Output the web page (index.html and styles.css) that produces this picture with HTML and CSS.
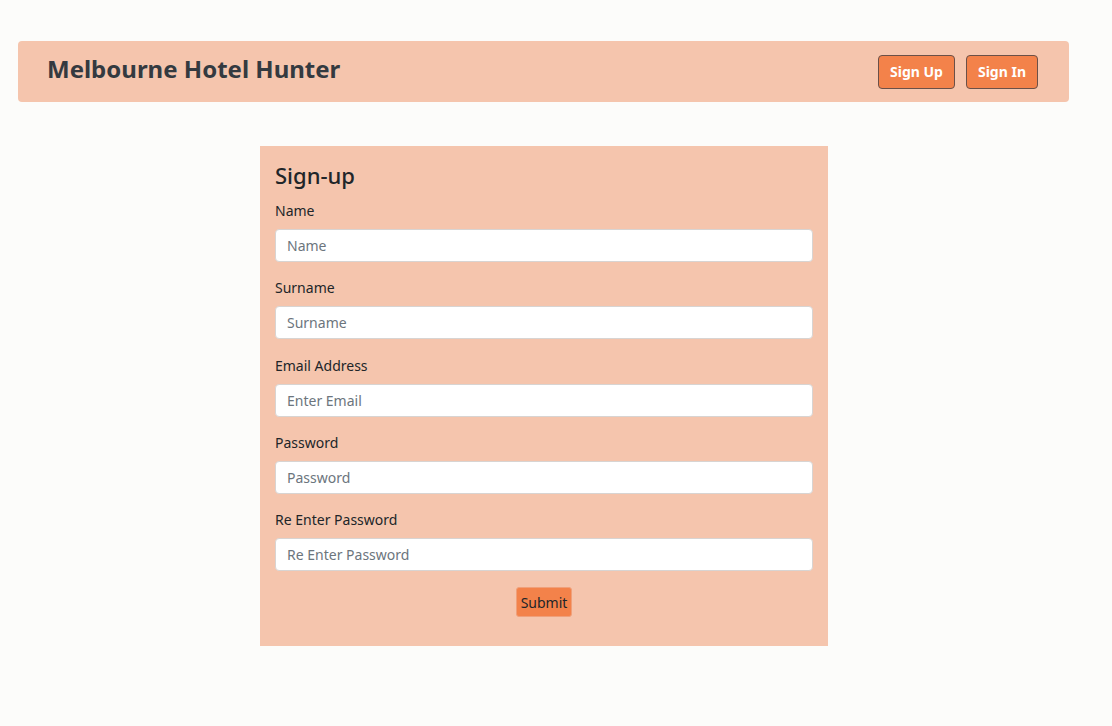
FILE: index.html
```html
<!DOCTYPE html>
<html lang="en">
<head>
<meta charset="utf-8">
<title>Melbourne Hotel Hunter</title>
<link rel="stylesheet" href="styles.css">
</head>
<body>
<nav class="navbar">
  <h1 class="brand">Melbourne Hotel Hunter</h1>
  <div class="nav-actions">
    <button class="nav-btn" type="button">Sign Up</button>
    <button class="nav-btn" type="button">Sign In</button>
  </div>
</nav>
<main class="page">
  <form class="card">
    <h2 class="card-title">Sign-up</h2>
    <div class="field">
      <label class="label" for="name">Name</label>
      <input class="input" id="name" type="text" placeholder="Name">
    </div>
    <div class="field">
      <label class="label" for="surname">Surname</label>
      <input class="input" id="surname" type="text" placeholder="Surname">
    </div>
    <div class="field">
      <label class="label" for="email">Email Address</label>
      <input class="input" id="email" type="email" placeholder="Enter Email">
    </div>
    <div class="field">
      <label class="label" for="pw">Password</label>
      <input class="input" id="pw" type="password" placeholder="Password">
    </div>
    <div class="field">
      <label class="label" for="pw2">Re Enter Password</label>
      <input class="input" id="pw2" type="password" placeholder="Re Enter Password">
    </div>
    <div class="actions">
      <button class="submit" type="button">Submit</button>
    </div>
  </form>
</main>
</body>
</html>
```
FILE: styles.css
```css
* { box-sizing: border-box; }
html, body { margin: 0; padding: 0; }
body {
  background: #fcfcfa;
  font-family: "Segoe UI", "Noto Sans", "Open Sans", sans-serif;
  color: #212529;
  font-size: 14px;
}
.navbar {
  margin: 41px 43px 0 18px;
  height: 61px;
  background: #f5c5ad;
  border-radius: 4px;
  display: flex;
  align-items: center;
  justify-content: space-between;
  padding: 0 31px 0 29px;
}
.brand {
  margin: -4px 0 0;
  font-size: 24px;
  font-weight: 700;
  color: #343a40;
  line-height: 1.2;
}
.nav-actions {
  display: flex;
  gap: 11px;
  padding-top: 1px;
}
.nav-btn {
  font-family: inherit;
  font-size: 14px;
  font-weight: 700;
  color: #fff;
  background: #f3824a;
  border: 1px solid #6b5048;
  border-radius: 4px;
  height: 34px;
  padding: 0 11px;
  margin-top: -1px;
  cursor: pointer;
}
.page {
  display: flex;
  justify-content: center;
  padding-top: 44px;
}
.card {
  width: 568px;
  margin-left: -24px;
  background: #f5c5ad;
  padding: 15px 15px 29px;
}
.card-title {
  margin: 0 0 12px;
  font-size: 22px;
  font-weight: 500;
  line-height: 28px;
  color: #212529;
}
.field { margin-bottom: 16.25px; }
.label {
  display: block;
  line-height: 20px;
  margin-bottom: 8px;
  font-size: 14px;
  color: #212529;
}
.input {
  display: block;
  width: 100%;
  height: 33px;
  border: 1px solid #d8d4d2;
  border-radius: 4px;
  background: #fff;
  padding: 0 11px;
  font-family: inherit;
  font-size: 14px;
  color: #495057;
}
.input::placeholder { color: #6c757d; }
.actions {
  display: flex;
  justify-content: center;
}
.submit {
  font-family: inherit;
  font-size: 14px;
  color: #212529;
  background: #f3824a;
  border: 1px solid #f0a07a;
  border-radius: 3px;
  height: 30px;
  padding: 0 4px;
  cursor: pointer;
}
```
